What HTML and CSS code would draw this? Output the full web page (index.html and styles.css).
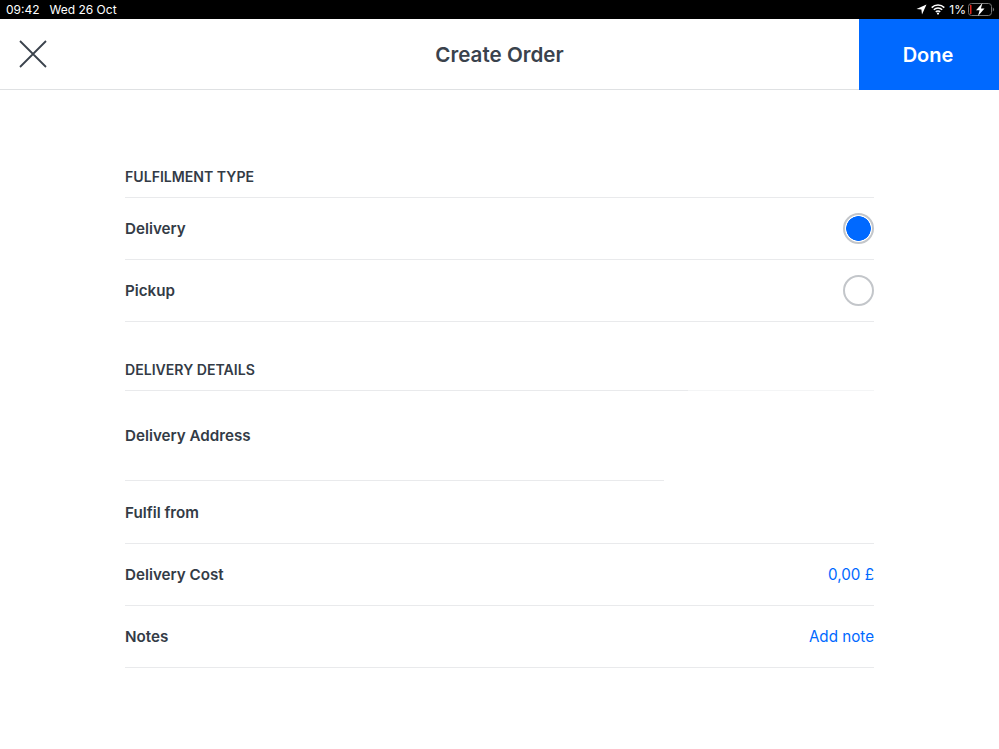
FILE: index.html
```html
<!DOCTYPE html>
<html lang="en">
<head>
<meta charset="utf-8">
<title>Create Order</title>
<link rel="stylesheet" href="styles.css">
</head>
<body>
<div class="status">
  <div class="status-left"><span>09:42</span><span>Wed 26 Oct</span></div>
  <div class="status-right">
    <svg class="ic-loc" width="11" height="11" viewBox="0 0 11 11"><path d="M10.5 .5 L.5 5 L5.4 5.6 L6 10.5 Z" fill="#fff"/></svg>
    <svg class="ic-wifi" width="14" height="11" viewBox="0 0 14 11"><path d="M.7 3.6 A9 9 0 0 1 13.3 3.6 M2.8 5.8 A6 6 0 0 1 11.2 5.8 M4.8 7.9 A3.1 3.1 0 0 1 9.2 7.9" fill="none" stroke="#fff" stroke-width="1.5"/><circle cx="7" cy="9.6" r="1.1" fill="#fff"/></svg>
    <span class="pct">1%</span>
    <svg class="ic-batt" width="27" height="13" viewBox="0 0 27 13"><rect x=".5" y=".5" width="23" height="12" rx="3" fill="none" stroke="#777"/><rect x="2" y="2" width="1.5" height="9" fill="#e0241b"/><path d="M24.8 4.5 a2.2 2.2 0 0 1 0 4z" fill="#777"/><path d="M14.5 0 L8 7.2 H11.6 L10 13 L16.5 5.6 H12.9 Z" fill="#fff"/></svg>
  </div>
</div>
<header class="nav">
  <button class="close" aria-label="Close">
    <svg width="30" height="30" viewBox="0 0 30 30"><path d="M2 2 L28 28 M28 2 L2 28" fill="none" stroke="#3a424c" stroke-width="1.8"/></svg>
  </button>
  <h1 class="title">Create Order</h1>
  <button class="done">Done</button>
</header>
<main class="content">
  <section class="sec-first">
    <h2 class="sec-head">FULFILMENT TYPE</h2>
    <div class="row"><span class="label">Delivery</span><span class="radio radio-on"></span></div>
    <div class="row"><span class="label">Pickup</span><span class="radio"></span></div>
  </section>
  <section class="sec-second">
    <h2 class="sec-head sec-head-faint">DELIVERY DETAILS</h2>
    <div class="row-address"><span class="label">Delivery Address</span></div>
    <div class="row row-tall"><span class="label">Fulfil from</span></div>
    <div class="row"><span class="label">Delivery Cost</span><span class="value">0,00 £</span></div>
    <div class="row"><span class="label">Notes</span><span class="value">Add note</span></div>
  </section>
</main>
</body>
</html>
```
FILE: styles.css
```css
* { box-sizing: border-box; }
html, body { margin: 0; padding: 0; }
body { width: 999px; height: 749px; background: #fff; overflow: hidden; font-family: Inter, "Liberation Sans", sans-serif; color: #333b46; }

.status { height: 19px; background: #000; color: #fff; display: flex; justify-content: space-between; align-items: center; padding: 0 4px 0 6px; font-size: 12px; line-height: 19px; }
.status-left { display: flex; gap: 10px; }
.status-right { display: flex; align-items: center; gap: 3px; }
.ic-loc { margin-right: 1px; }
.pct { margin-left: 1px; }
.ic-batt { margin-left: -1px; }

.nav { height: 71px; display: flex; align-items: center; justify-content: space-between; border-bottom: 1px solid #dfe1e3; position: relative; }
.close { width: 66px; height: 70px; padding: 0 0 0 18px; border: 0; background: none; display: flex; align-items: center; }
.title { position: absolute; left: 0; right: 0; top: 0; margin: 0; text-align: center; font-size: 20.6px; font-weight: 600; line-height: 72px; color: #3a424c; pointer-events: none; }
.done { width: 140px; height: 71px; margin-bottom: -1px; padding: 0 2px 0 0; border: 0; background: #0069ff; color: #fff; font: 600 20px Inter, "Liberation Sans", sans-serif; }

.content { padding: 0 125px; }
.sec-first { padding-top: 77px; }
.sec-second { padding-top: 38px; }
.sec-head { margin: 0; height: 31px; padding: 0 0 10px; font-size: 14.1px; line-height: 20px; font-weight: 600; color: #333b46; border-bottom: 1px solid #e9eaec; }
.sec-head-faint { border-bottom: 0; background: linear-gradient(to right, #e9eaec 563px, #f4f5f6 563px) left bottom / 100% 1px no-repeat; }
.row { height: 62px; display: flex; align-items: center; justify-content: space-between; border-bottom: 1px solid #e9eaec; }
.row-tall { height: 63px; }
.row-address { height: 90px; margin-right: 210px; display: flex; align-items: center; border-bottom: 1px solid #e9eaec; }
.label { font-size: 15.2px; font-weight: 600; color: #333b46; }
.value { font-size: 15.2px; font-weight: 400; color: #0069ff; }
.radio { width: 31px; height: 31px; border-radius: 50%; border: 2px solid #c3c6ca; background: #fff; }
.radio-on { background: radial-gradient(circle closest-side, #0069ff 12px, #fff 12.6px); }
```
